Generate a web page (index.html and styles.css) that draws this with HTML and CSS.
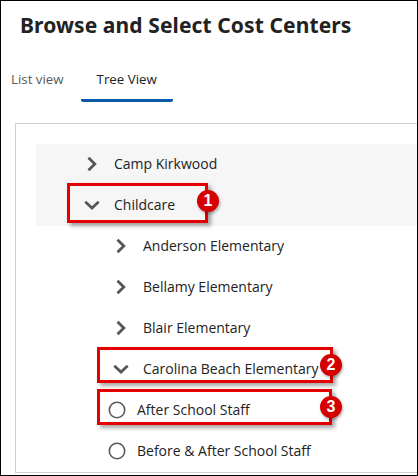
FILE: index.html
```html
<!DOCTYPE html>
<html lang="en">
<head>
<meta charset="utf-8">
<title>Browse and Select Cost Centers</title>
<link rel="stylesheet" href="styles.css">
</head>
<body>
<div class="page">
  <h1 class="title">Browse and Select Cost Centers</h1>
  <nav class="tabs">
    <span class="tab tab-list">List view</span>
    <span class="tab active">Tree View</span>
  </nav>
  <div class="panel">
    <ul class="tree">
      <li class="row l1 shaded">
        <svg class="ico" viewBox="0 0 16 16"><path d="M4.5 1.8 L10.8 8 L4.5 14.2"/></svg>
        <span>Camp Kirkwood</span>
      </li>
      <li class="row l1 shaded">
        <svg class="ico" viewBox="0 0 16 16"><path d="M1.3 4.8 L8 11 L14.7 4.8"/></svg>
        <span>Childcare</span>
      </li>
      <li class="row l2">
        <svg class="ico" viewBox="0 0 16 16"><path d="M4.5 1.8 L10.8 8 L4.5 14.2"/></svg>
        <span>Anderson Elementary</span>
      </li>
      <li class="row l2">
        <svg class="ico" viewBox="0 0 16 16"><path d="M4.5 1.8 L10.8 8 L4.5 14.2"/></svg>
        <span>Bellamy Elementary</span>
      </li>
      <li class="row l2">
        <svg class="ico" viewBox="0 0 16 16"><path d="M4.5 1.8 L10.8 8 L4.5 14.2"/></svg>
        <span>Blair Elementary</span>
      </li>
      <li class="row l2">
        <svg class="ico" viewBox="0 0 16 16"><path d="M1.3 4.8 L8 11 L14.7 4.8"/></svg>
        <span>Carolina Beach Elementary</span>
      </li>
      <li class="row leaf">
        <svg class="radio" viewBox="0 0 18 18"><circle cx="9" cy="9" r="7.7"/></svg>
        <span>After School Staff</span>
      </li>
      <li class="row leaf">
        <svg class="radio" viewBox="0 0 18 18"><circle cx="9" cy="9" r="7.7"/></svg>
        <span>Before &amp; After School Staff</span>
      </li>
    </ul>
  </div>

  <div class="callout box1"></div>
  <div class="badge badge1">1</div>
  <div class="callout box2"></div>
  <div class="badge badge2">2</div>
  <div class="callout box3"></div>
  <div class="badge badge3">3</div>
</div>
</body>
</html>
```

FILE: styles.css
```css
html, body {
  margin: 0;
  padding: 0;
  background: #fff;
}

.page {
  position: relative;
  width: 418px;
  height: 476px;
  box-sizing: border-box;
  border: 1px solid #000;
  overflow: hidden;
  font-family: "Open Sans", "Noto Sans", sans-serif;
  color: #222;
}

.title {
  margin: 9px 0 0 19px;
  font-family: "Noto Sans", sans-serif;
  font-weight: 700;
  font-size: 21px;
  line-height: 30px;
  color: #222;
  letter-spacing: 0.1px;
}

.tabs {
  display: flex;
  margin-top: 29px;
  padding-left: 10px;
}

.tab {
  font-size: 13.3px;
  line-height: 20px;
  padding: 0 16px 10px;
  border-bottom: 3px solid transparent;
  color: #222;
}

.tab-list {
  padding-left: 0;
  padding-right: 17px;
  color: #595959;
}

.tab.active {
  border-bottom-color: #0b5aa6;
  border-radius: 0 0 2px 2px;
}

.panel {
  margin: 21px -30px 0 14px;
  border: 1px solid #cfcfcf;
  padding: 20px 0 0 20px;
}

.tree {
  list-style: none;
  margin: 0;
  padding: 0;
}

.row {
  display: flex;
  align-items: center;
  box-sizing: border-box;
  height: 41px;
  padding-bottom: 2px;
  font-size: 14px;
  color: #222;
}

.shaded {
  background: #f6f6f6;
}

.l1 { padding-left: 48px; }
.l2 { padding-left: 77px; }
.leaf { padding-left: 72px; }

.ico {
  width: 16px;
  height: 16px;
  margin-right: 14px;
  flex: none;
}

.ico path {
  fill: none;
  stroke: #565656;
  stroke-width: 2.8;
}

.radio {
  width: 18px;
  height: 18px;
  margin-right: 11px;
  flex: none;
}

.radio circle {
  fill: #fff;
  stroke: #595959;
  stroke-width: 1.6;
}

.callout {
  position: absolute;
  box-sizing: border-box;
  border: 3px solid #e40000;
  box-shadow: 3px 3px 4px rgba(0, 0, 0, 0.35);
}

.box1 { left: 66px; top: 182px; width: 141px; height: 40px; }
.box2 { left: 96px; top: 346px; width: 236px; height: 36px; }
.box3 { left: 96px; top: 388px; width: 235px; height: 36px; }

.badge {
  position: absolute;
  width: 22px;
  height: 22px;
  border-radius: 50%;
  background: #d50000;
  color: #fff;
  font-family: "Liberation Sans", Arial, sans-serif;
  font-weight: 700;
  font-size: 16px;
  line-height: 22px;
  text-align: center;
  box-shadow: 1px 2px 3px rgba(0, 0, 0, 0.3);
}

.badge1 { left: 196px; top: 189px; }
.badge2 { left: 319px; top: 353px; }
.badge3 { left: 319px; top: 395px; }
```
